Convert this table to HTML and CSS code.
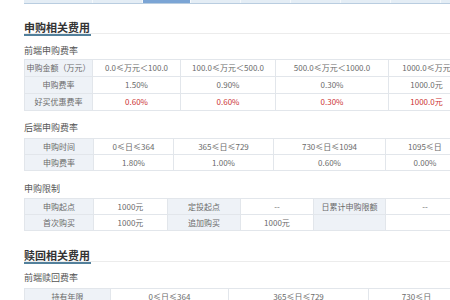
FILE: index.html
```html
<!DOCTYPE html>
<html lang="zh-CN">
<head>
<meta charset="utf-8">
<title>费率</title>
<link rel="stylesheet" href="styles.css">
</head>
<body>
<div class="page">
  <div class="tabs">
    <span class="tab w69"></span><span class="tab"></span><span class="tab active"></span><span class="tab"></span><span class="tab"></span><span class="tab"></span><span class="tab"></span><span class="tab"></span><span class="tab"></span>
  </div>

  <div class="sec-title first"><span>申购相关费用</span></div>

  <div class="sub s1">前端申购费率</div>
  <table class="grid tall">
    <colgroup><col class="c68"><col class="c88"><col class="c95"><col class="c113"><col class="c76"></colgroup>
    <tr><th>申购金额（万元）</th><td>0.0≤万元＜100.0</td><td>100.0≤万元＜500.0</td><td>500.0≤万元＜1000.0</td><td>1000.0≤万元</td></tr>
    <tr><th>申购费率</th><td>1.50%</td><td>0.90%</td><td>0.30%</td><td>1000.0元</td></tr>
    <tr><th>好买优惠费率</th><td class="red">0.60%</td><td class="red">0.60%</td><td class="red">0.30%</td><td class="red">1000.0元</td></tr>
  </table>

  <div class="sub s2">后端申购费率</div>
  <table class="grid">
    <colgroup><col class="c69"><col class="c80"><col class="c100"><col class="c112"><col class="c79"></colgroup>
    <tr><th>申购时间</th><td>0≤日≤364</td><td>365≤日≤729</td><td>730≤日≤1094</td><td>1095≤日</td></tr>
    <tr><th>申购费率</th><td>1.80%</td><td>1.00%</td><td>0.60%</td><td>0.00%</td></tr>
  </table>

  <div class="sub s3">申购限制</div>
  <table class="grid">
    <colgroup><col class="c69"><col class="c74"><col class="c73"><col class="c73"><col class="c72"><col class="c79"></colgroup>
    <tr><th>申购起点</th><td>1000元</td><th>定投起点</th><td>--</td><th>日累计申购限额</th><td>--</td></tr>
    <tr><th>首次购买</th><td>1000元</td><th>追加购买</th><td>1000元</td><th></th><td></td></tr>
  </table>

  <div class="sec-title second"><span>赎回相关费用</span></div>

  <div class="sub s4">前端赎回费率</div>
  <table class="grid">
    <colgroup><col class="c86"><col class="c118"><col class="c140"><col class="c96"></colgroup>
    <tr><th>持有年限</th><td>0≤日≤364</td><td>365≤日≤729</td><td>730≤日</td></tr>
  </table>
</div>
</body>
</html>
```

FILE: styles.css
```css
html, body {
  margin: 0;
  padding: 0;
  background: #ffffff;
  overflow: hidden;
}

body {
  width: 450px;
  height: 300px;
  font-family: "Noto Sans CJK SC", "Liberation Sans", sans-serif;
  color: #666666;
}

.page {
  padding-left: 24px;
  width: 440px;
}

.tabs {
  display: flex;
  height: 3px;
  background: #e4edf5;
  border-bottom: 1px solid #b9cde0;
  width: 460px;
}

.tab {
  width: 49px;
  flex: none;
  border-right: 1px solid #f4f8fb;
}

.tab.w69 { width: 68px; }

.tab.active {
  width: 47px;
  background: #7ba5d5;
}

.sec-title {
  border-bottom: 1px solid #ececec;
  width: 460px;
  line-height: 14px;
  height: 15px;
}

.sec-title span {
  display: inline-block;
  font-size: 11px;
  font-weight: bold;
  color: #333333;
  line-height: 14px;
  padding-right: 1px;
  border-bottom: 2px solid #52809b;
}

.sec-title.first { margin-top: 14px; }
.sec-title.second { margin-top: 15px; }

.sub {
  font-size: 9px;
  line-height: 12px;
  color: #555555;
}

.s1 { margin-top: 11px; margin-bottom: 2px; }
.s2 { margin-top: 11px; margin-bottom: 4px; }
.s3 { margin-top: 12px; margin-bottom: 3px; }
.s4 { margin-top: 10px; margin-bottom: 4px; }

.grid {
  border-collapse: collapse;
  table-layout: fixed;
  width: 440px;
}

.grid th,
.grid td {
  border: 1px solid #e2e6eb;
  height: 15px;
  padding: 0;
  font-size: 8px;
  font-weight: normal;
  text-align: center;
  white-space: nowrap;
  overflow: hidden;
  color: #6a6a6a;
  line-height: 15px;
}

.grid.tall th,
.grid.tall td {
  height: 16px;
  line-height: 16px;
}

.grid th {
  background: #eef2f7;
}

.grid td.red { color: #cc3333; }

.c68 { width: 68px; }
.c69 { width: 69px; }
.c72 { width: 72px; }
.c73 { width: 73px; }
.c74 { width: 74px; }
.c76 { width: 76px; }
.c79 { width: 79px; }
.c80 { width: 80px; }
.c86 { width: 86px; }
.c88 { width: 88px; }
.c95 { width: 95px; }
.c96 { width: 96px; }
.c100 { width: 100px; }
.c112 { width: 112px; }
.c113 { width: 113px; }
.c118 { width: 118px; }
.c140 { width: 140px; }
```
